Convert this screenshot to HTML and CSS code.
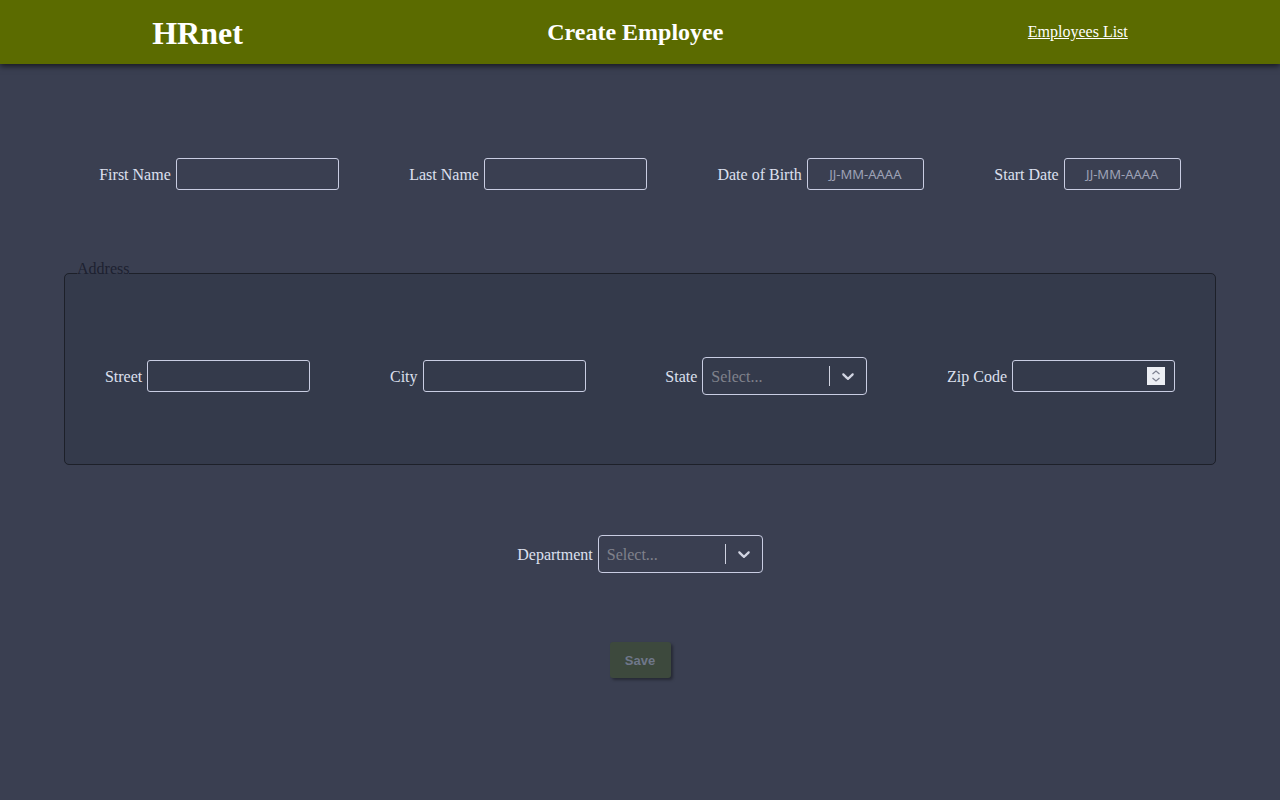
FILE: index.html
```html
<!DOCTYPE html>
<html lang="en">
<head>
<meta charset="utf-8">
<title>HRnet - Create Employee</title>
<link rel="stylesheet" href="styles.css">
</head>
<body>
<header class="topbar">
  <div class="brand">HRnet</div>
  <h1 class="title">Create Employee</h1>
  <a class="nav-link" href="#">Employees List</a>
</header>
<main class="page">
  <form class="form">
    <div class="row">
      <div class="field"><label for="fn">First Name</label><input id="fn" class="text-input" type="text"></div>
      <div class="field"><label for="ln">Last Name</label><input id="ln" class="text-input" type="text"></div>
      <div class="field"><label for="dob">Date of Birth</label><input id="dob" class="text-input date-input" type="text" placeholder="JJ-MM-AAAA"></div>
      <div class="field"><label for="sd">Start Date</label><input id="sd" class="text-input date-input" type="text" placeholder="JJ-MM-AAAA"></div>
    </div>
    <fieldset class="address">
      <legend class="legend">Address</legend>
      <div class="row row-tall">
        <div class="field"><label for="st">Street</label><input id="st" class="text-input" type="text"></div>
        <div class="field"><label for="ci">City</label><input id="ci" class="text-input" type="text"></div>
        <div class="field"><label>State</label>
          <div class="select">
            <span class="select-placeholder">Select...</span>
            <span class="select-sep"></span>
            <span class="select-ind"><svg width="20" height="20" viewBox="0 0 20 20"><path fill="currentColor" d="M4.516 7.548c0.436-0.446 1.043-0.481 1.576 0l3.908 3.747 3.908-3.747c0.533-0.481 1.141-0.446 1.574 0 0.436 0.445 0.408 1.197 0 1.615-0.406 0.418-4.695 4.502-4.695 4.502-0.217 0.223-0.502 0.335-0.787 0.335s-0.57-0.112-0.789-0.335c0 0-4.287-4.084-4.695-4.502s-0.436-1.17 0-1.615z"/></svg></span>
          </div>
        </div>
        <div class="field"><label for="zc">Zip Code</label>
          <div class="number-wrap">
            <input id="zc" class="text-input" type="text">
            <span class="spinner"><svg width="18" height="18" viewBox="0 0 18 18"><path d="M5.5 7 L9 4 L12.5 7" fill="none" stroke="#7d8090" stroke-width="1.2"/><path d="M5.5 11 L9 14 L12.5 11" fill="none" stroke="#7d8090" stroke-width="1.2"/></svg></span>
          </div>
        </div>
      </div>
    </fieldset>
    <div class="row row-center">
      <div class="field"><label>Department</label>
        <div class="select">
          <span class="select-placeholder">Select...</span>
          <span class="select-sep"></span>
          <span class="select-ind"><svg width="20" height="20" viewBox="0 0 20 20"><path fill="currentColor" d="M4.516 7.548c0.436-0.446 1.043-0.481 1.576 0l3.908 3.747 3.908-3.747c0.533-0.481 1.141-0.446 1.574 0 0.436 0.445 0.408 1.197 0 1.615-0.406 0.418-4.695 4.502-4.695 4.502-0.217 0.223-0.502 0.335-0.787 0.335s-0.57-0.112-0.789-0.335c0 0-4.287-4.084-4.695-4.502s-0.436-1.17 0-1.615z"/></svg></span>
        </div>
      </div>
    </div>
    <div class="actions"><button class="save" type="button" disabled>Save</button></div>
  </form>
</main>
</body>
</html>
```
FILE: styles.css
```css
* { box-sizing: border-box; }
html, body { margin: 0; padding: 0; }
body {
  background: #3a3f51;
  font-family: "Liberation Serif", "Times New Roman", serif;
  font-size: 16px;
  color: #dde0ef;
  min-height: 800px;
}
.topbar {
  height: 64px;
  background: #5b6b00;
  display: flex;
  align-items: center;
  justify-content: space-around;
  box-shadow: 0 2px 6px rgba(0, 0, 0, 0.65);
  position: relative;
}
.brand {
  font-size: 32px;
  font-weight: bold;
  color: #ffffff;
  line-height: 1;
  margin-top: 2px;
}
.title {
  margin: 0;
  font-size: 24px;
  font-weight: bold;
  color: #ffffff;
  line-height: 1;
}
.nav-link {
  color: #ffffff;
  font-size: 16px;
  text-decoration: underline;
}
.page {
  width: 1152px;
  margin: 0 auto;
}
.form { padding-top: 94px; }
.row {
  display: flex;
  justify-content: space-around;
  align-items: center;
  height: 32px;
}
.row-tall { height: 38px; }
.row-center { justify-content: center; height: 38px; margin-top: 70px; }
.field {
  display: flex;
  align-items: center;
  gap: 5px;
}
.field label { white-space: nowrap; color: #dde0ef; padding-top: 2px; }
.text-input {
  width: 163px;
  height: 32px;
  border: 1px solid #c9cde2;
  border-radius: 3px;
  background: transparent;
  color: #dde0ef;
  font-family: "Liberation Serif", serif;
  font-size: 16px;
  padding: 0 6px;
  outline: none;
}
.date-input {
  width: 117px;
  text-align: center;
  font-family: "Noto Sans", "DejaVu Sans", sans-serif;
  font-size: 13px;
}
.date-input::placeholder { color: #9ea2b6; }
.address {
  margin: 70px 0 0;
  padding: 70px 0 69px;
  border: 1px solid #1d2029;
  border-radius: 5px;
  background: #343a4b;
  min-inline-size: 0;
}
.legend {
  margin-left: 12px;
  padding: 0 0 9px;
  color: #1d2130;
  font-size: 16px;
}
.select {
  width: 165px;
  height: 38px;
  border: 1px solid #c9cde2;
  border-radius: 4px;
  display: flex;
  align-items: center;
}
.select-placeholder {
  flex: 1;
  padding-left: 8px;
  padding-top: 2px;
  color: #80828c;
  font-size: 16px;
}
.select-sep {
  width: 1px;
  height: 20px;
  background: #cfd2e0;
}
.select-ind {
  width: 36px;
  height: 36px;
  padding: 8px;
  color: #d2d5e2;
  display: flex;
}
.number-wrap { position: relative; }
.spinner {
  position: absolute;
  right: 10px;
  top: 7px;
  width: 18px;
  height: 18px;
  background: #eceef4;
  display: flex;
}
.actions {
  display: flex;
  justify-content: center;
  margin-top: 69px;
}
.save {
  width: 61px;
  height: 36px;
  border: none;
  border-radius: 3px;
  background: #3d493d;
  color: #6f778a;
  font-family: "Liberation Sans", Arial, sans-serif;
  font-weight: bold;
  font-size: 13px;
  box-shadow: 2px 2px 3px rgba(0, 0, 0, 0.35);
}
```
